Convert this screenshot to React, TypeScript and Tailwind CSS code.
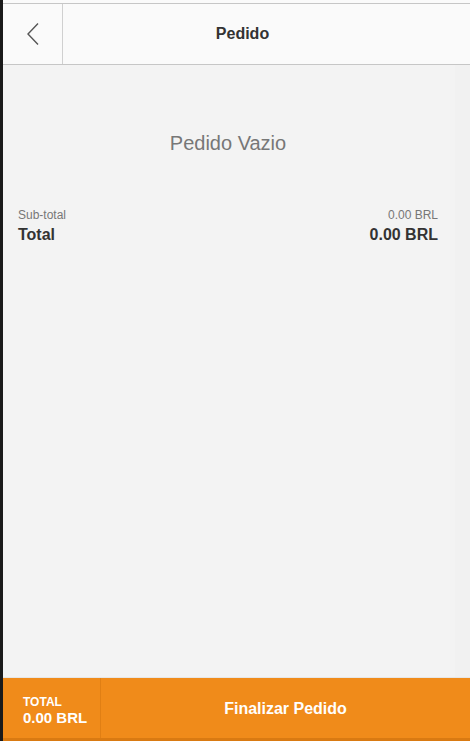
import React from "react";

export default function App() {
  return (
    <div
      className="w-[470px] h-[741px] flex flex-col bg-white border-l-[3px] border-[#1a1a1a] overflow-hidden"
      style={{ fontFamily: '"Liberation Sans", Arial, sans-serif' }}
    >
      <div className="h-[3px] bg-[#fafafa]" />
      <header className="h-[62px] flex bg-[#fafafa] border-t border-b border-[#c6c6c6]">
        <button className="w-[60px] flex items-center justify-center border-r border-[#d0d0d0]">
          <svg width="14" height="24" viewBox="0 0 14 24" fill="none">
            <path d="M12 1.5 L2 12 L12 22.5" stroke="#555" strokeWidth="1.4" />
          </svg>
        </button>
        <div className="flex-1 flex items-center justify-center pr-[48px] text-[16px] font-bold text-[#333]">
          Pedido
        </div>
      </header>
      <main className="flex-1 flex bg-[#f3f3f3]">
        <div className="flex-1 flex flex-col">
          <div className="pt-[63px] text-center text-[20px] text-[#777] pr-[2px]">Pedido Vazio</div>
          <div className="mt-[50px] pl-[15px] pr-[17px]">
            <div className="flex justify-between text-[12px] text-[#777] leading-[14px]">
              <span>Sub-total</span>
              <span>0.00 BRL</span>
            </div>
            <div className="flex justify-between text-[16px] font-bold text-[#333] leading-[20px] mt-[3px]">
              <span>Total</span>
              <span>0.00 BRL</span>
            </div>
          </div>
        </div>
        <div className="w-[15px] bg-[#f1f1f1]" />
      </main>
      <footer className="h-[61px] flex bg-[#f08b1a] border-t border-[#e6e6e6] text-white font-bold">
        <div className="w-[98px] flex flex-col justify-center pl-[20px] pt-[6px] border-r border-[#e07f14]">
          <div className="text-[12px] leading-[14px]">TOTAL</div>
          <div className="text-[15px] leading-[18px]">0.00 BRL</div>
        </div>
        <div className="flex-1 flex items-center justify-center text-[16px] pt-[2px]">Finalizar Pedido</div>
      </footer>
      <div className="h-[3px] bg-[#d97a12]" />
    </div>
  );
}
